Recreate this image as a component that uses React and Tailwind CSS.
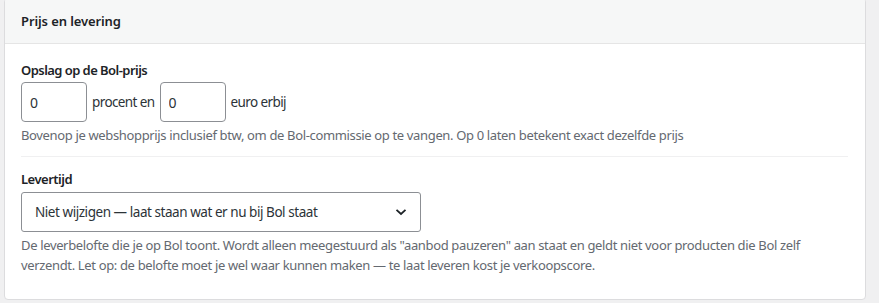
import React from "react";

function Chevron() {
  return (
    <svg width="12" height="8" viewBox="0 0 12 8" className="shrink-0">
      <path d="M1.5 1.8 L6 6 L10.5 1.8" fill="none" stroke="#1d2327" strokeWidth="1.8" />
    </svg>
  );
}

export default function App() {
  const font = { fontFamily: '"Noto Sans", "Open Sans", sans-serif' };

  return (
    <div className="min-h-screen bg-[#f0f0f1] px-[4px] pb-[3px]" style={font}>
      {/* Card */}
      <div className="-mt-[2px] bg-white border border-[#dcdcde] rounded-[4px] w-[862px] overflow-hidden">
        {/* Header */}
        <div className="bg-[#f6f7f7] border-b border-[#e5e5e5] h-[45px] px-4 pt-[2px] flex items-center">
          <h2 className="text-[13px] font-semibold text-[#1d2327] tracking-[-0.1px]">Prijs en levering</h2>
        </div>

        {/* Body */}
        <div className="px-4 pt-[16px] pb-[24px] text-[#1d2327]">
          {/* Opslag */}
          <div>
            <div className="text-[13px] font-semibold leading-[20px] tracking-[-0.55px]">Opslag op de Bol-prijs</div>
            <div className="mt-[2px] flex items-center gap-[5px] text-[13.5px] tracking-[-0.6px] text-[#2c3338]">
              <input
                type="text"
                defaultValue="0"
                className="w-[66px] h-[40px] border border-[#8c8f94] rounded-[4px] px-[8px] text-[14px] text-[#2c3338] outline-none"
              />
              <span>procent en</span>
              <input
                type="text"
                defaultValue="0"
                className="w-[66px] h-[40px] border border-[#8c8f94] rounded-[4px] px-[8px] text-[14px] text-[#2c3338] outline-none"
              />
              <span>euro erbij</span>
            </div>
            <p className="mt-[3px] text-[13px] leading-[20px] text-[#646970] tracking-[-0.35px]">
              Bovenop je webshopprijs inclusief btw, om de Bol-commissie op te vangen. Op 0 laten betekent exact dezelfde prijs
            </p>
          </div>

          <div className="mt-[11px] mb-[12px] border-t border-[#f0f0f1] mr-[1px]" />

          {/* Levertijd */}
          <div>
            <div className="text-[13px] font-semibold leading-[20px] tracking-[-0.5px]">Levertijd</div>
            <div className="mt-[3px] w-[400px] h-[40px] border border-[#8c8f94] rounded-[3px] pl-[13px] pr-[13px] flex items-center justify-between">
              <span className="text-[13.5px] text-[#2c3338] tracking-[-0.45px]">Niet wijzigen — laat staan wat er nu bij Bol staat</span>
              <Chevron />
            </div>
            <p className="mt-[3px] text-[13px] leading-[20px] text-[#646970] tracking-[-0.35px] max-w-[810px]">
              De leverbelofte die je op Bol toont. Wordt alleen meegestuurd als "aanbod pauzeren" aan staat en geldt niet voor producten die Bol zelf verzendt. Let op: de belofte moet je wel waar kunnen maken — te laat leveren kost je verkoopscore.
            </p>
          </div>
        </div>
      </div>
    </div>
  );
}
